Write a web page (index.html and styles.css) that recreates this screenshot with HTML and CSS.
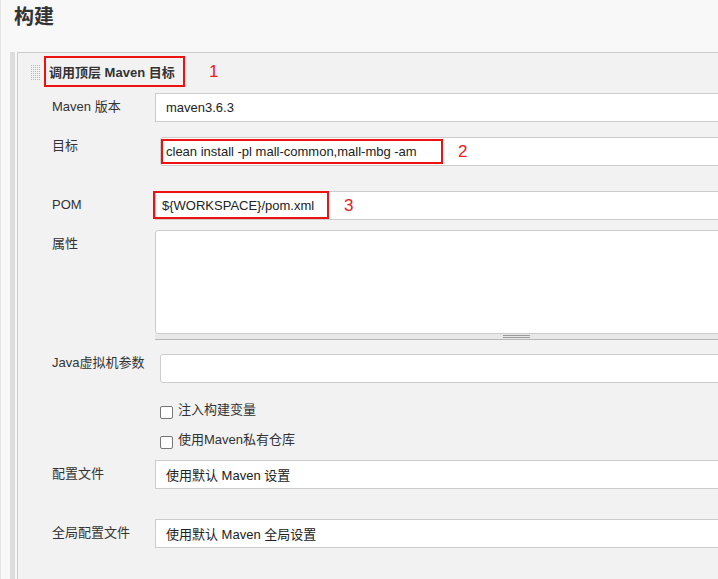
FILE: index.html
```html
<!DOCTYPE html>
<html lang="zh-CN">
<head>
<meta charset="utf-8">
<title>构建</title>
<link rel="stylesheet" href="styles.css">
</head>
<body>
<h1 class="page-title">构建</h1>
<div class="section">
  <div class="section-bar"></div>
  <div class="panel">
    <div class="panel-head">
      <span class="grip"></span>
      <span class="mark mark-title">调用顶层 Maven 目标</span>
      <span class="num num-1">1</span>
    </div>

    <div class="row row-maven">
      <div class="label">Maven 版本</div>
      <div class="field">maven3.6.3</div>
    </div>

    <div class="row row-goal">
      <div class="label label-top">目标</div>
      <div class="field field-indent field-round field-mark">
        <span class="mark mark-goal">clean install -pl mall-common,mall-mbg -am</span>
        <span class="num num-2">2</span>
      </div>
    </div>

    <div class="row row-pom">
      <div class="label">POM</div>
      <div class="field field-mark">
        <span class="mark mark-pom">${WORKSPACE}/pom.xml</span>
        <span class="num num-3">3</span>
      </div>
    </div>

    <div class="row row-props">
      <div class="label">属性</div>
      <div class="textarea-wrap">
        <div class="textarea"></div>
        <div class="resize-bar"><span class="resize-grip"></span></div>
      </div>
    </div>

    <div class="row row-java">
      <div class="label label-top">Java虚拟机参数</div>
      <div class="field field-indent field-round"></div>
    </div>

    <div class="check-row check-1">
      <span class="checkbox"></span>
      <span class="check-text">注入构建变量</span>
    </div>
    <div class="check-row check-2">
      <span class="checkbox"></span>
      <span class="check-text">使用Maven私有仓库</span>
    </div>

    <div class="row row-settings">
      <div class="label">配置文件</div>
      <div class="field">使用默认 Maven 设置</div>
    </div>

    <div class="row row-global">
      <div class="label">全局配置文件</div>
      <div class="field">使用默认 Maven 全局设置</div>
    </div>
  </div>
</div>
</body>
</html>
```

FILE: styles.css
```css
html, body {
  height: 579px;
  overflow: hidden;
}
body {
  margin: 0;
  background: #f8f8f8;
  border-left: 1px solid #e4e4e4;
  font-family: "Liberation Sans", Arial, "Noto Sans CJK SC", sans-serif;
  font-size: 13px;
  color: #333;
}
.page-title {
  margin: 0;
  padding: 3px 0 0 13px;
  font-size: 20px;
  line-height: 28px;
  font-weight: bold;
  color: #333;
}
.section {
  display: flex;
  margin-top: 21px;
  height: 527px;
}
.section-bar {
  flex: none;
  width: 5px;
  margin-left: 9px;
  background: #dddddd;
}
.panel {
  flex: 1;
  min-width: 0;
  overflow: hidden;
  margin-left: 2px;
  background: #f2f2f2;
  border-left: 1px solid #cccccc;
  border-top: 1px solid #cccccc;
}
.panel-head {
  display: flex;
  align-items: center;
  margin-top: 3px;
  padding-left: 12px;
}
.grip {
  flex: none;
  width: 11px;
  height: 17px;
  margin-top: 1px;
  margin-right: 3px;
  background:
    linear-gradient(90deg, #f2f2f2 1px, transparent 1px) 0 0 / 2px 2px,
    linear-gradient(#f2f2f2 1px, #b8b8b8 1px) 0 0 / 2px 2px;
}
.mark {
  box-sizing: border-box;
  flex: none;
  display: inline-flex;
  align-items: center;
  border: 2px solid #ee1111;
}
.mark-title {
  width: 141px;
  height: 31px;
  padding-left: 3px;
  font-weight: bold;
  color: #333;
}
.num {
  flex: none;
  color: #e82020;
  font-size: 17px;
  line-height: 20px;
}
.num-1 { margin-left: 24px; margin-top: 1px; }
.num-2 { margin-left: 15px; }
.num-3 { margin-left: 15px; }

.row {
  display: flex;
  align-items: flex-start;
  padding-left: 34px;
}
.label {
  width: 103px;
  flex: none;
  padding-top: 5px;
  line-height: 18px;
  color: #333;
}
.label-top { padding-top: 0; }

.field {
  box-sizing: border-box;
  width: 722px;
  height: 29px;
  flex: none;
  display: flex;
  align-items: center;
  padding-left: 10px;
  background: #fff;
  border: 1px solid #cccccc;
  color: #222;
}
.field-indent {
  margin-left: 5px;
  width: 717px;
}
.field-round { border-radius: 3px; }
.field-mark {
  padding-left: 0;
  align-items: flex-start;
}
.mark-goal {
  width: 282px;
  height: 25px;
  margin-top: 1px;
  padding-left: 3px;
}
.mark-goal + .num { align-self: center; }
.mark-pom {
  width: 176px;
  height: 28px;
  margin-left: -3px;
  margin-top: -1px;
  padding-left: 7px;
}
.mark-pom + .num { align-self: center; }

.row-maven { margin-top: 6px; }
.row-goal { margin-top: 15px; }
.row-pom { margin-top: 25px; }
.row-props { margin-top: 10px; }
.row-java { margin-top: 14px; }
.row-settings { margin-top: 11px; }
.row-global { margin-top: 30px; }

.textarea-wrap {
  width: 722px;
  flex: none;
}
.textarea {
  box-sizing: border-box;
  height: 104px;
  background: #fff;
  border: 1px solid #cccccc;
  border-radius: 3px;
}
.resize-bar {
  height: 5px;
  background: #e8e8e8;
  border-bottom: 1px solid #b8b8b8;
  display: flex;
  justify-content: center;
  align-items: center;
}
.resize-grip {
  width: 27px;
  height: 3px;
  border-top: 1px solid #999;
  border-bottom: 1px solid #999;
  box-sizing: border-box;
}

.check-row {
  display: flex;
  align-items: flex-start;
  padding-left: 142px;
  line-height: 18px;
}
.check-1 { margin-top: 18px; }
.check-2 { margin-top: 12px; }
.checkbox {
  box-sizing: border-box;
  flex: none;
  width: 13px;
  height: 13px;
  margin-top: 5px;
  margin-right: 5px;
  background: #fff;
  border: 1px solid #767676;
  border-radius: 2px;
}
.check-text { color: #333; }
```
